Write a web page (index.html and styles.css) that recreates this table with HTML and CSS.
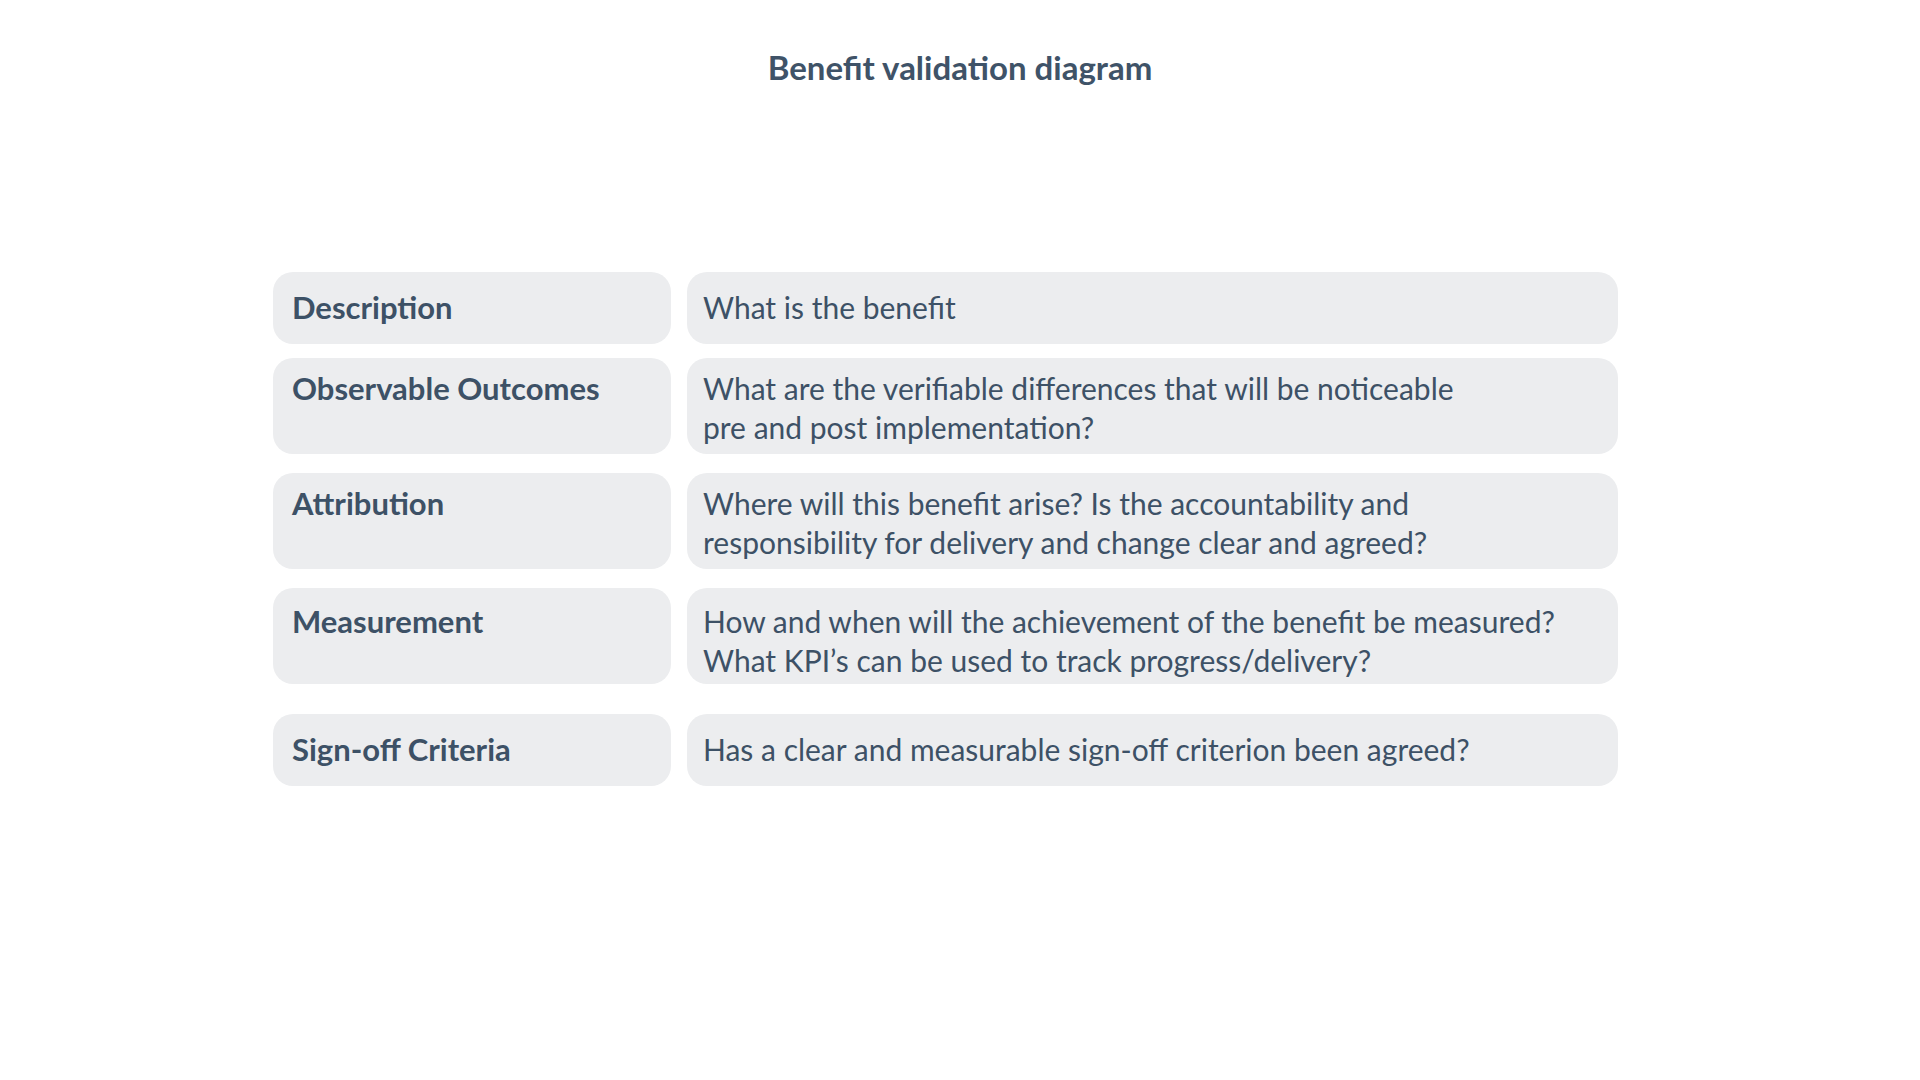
FILE: index.html
```html
<!DOCTYPE html>
<html lang="en">
<head>
<meta charset="utf-8">
<title>Benefit validation diagram</title>
<link rel="stylesheet" href="styles.css">
</head>
<body>
<main class="page">
  <h1 class="title">Benefit validation diagram</h1>
  <section class="table">
    <div class="row r1">
      <div class="cell label">Description</div>
      <div class="cell text">What is the benefit</div>
    </div>
    <div class="row r2">
      <div class="cell label top">Observable Outcomes</div>
      <div class="cell text">What are the verifiable differences that will be noticeable<br>pre and post implementation?</div>
    </div>
    <div class="row r3">
      <div class="cell label top">Attribution</div>
      <div class="cell text">Where will this benefit arise? Is the accountability and<br>responsibility for delivery and change clear and agreed?</div>
    </div>
    <div class="row r4">
      <div class="cell label top">Measurement</div>
      <div class="cell text">How and when will the achievement of the benefit be measured?<br>What KPI’s can be used to track progress/delivery?</div>
    </div>
    <div class="row r5">
      <div class="cell label">Sign-off Criteria</div>
      <div class="cell text">Has a clear and measurable sign-off criterion been agreed?</div>
    </div>
  </section>
</main>
</body>
</html>
```
FILE: styles.css
```css
* { box-sizing: border-box; }
html, body { margin: 0; padding: 0; background: #ffffff; }
body {
  font-family: Lato, "Open Sans", sans-serif;
  color: #3d5166;
  width: 1920px;
  height: 1080px;
}
.page { display: flex; flex-direction: column; align-items: center; }
.title {
  margin: 46px 0 0 0;
  font-size: 33px;
  line-height: 42px;
  font-weight: 700;
  color: #3f5368;
}
.table {
  margin-top: 184px;
  align-self: flex-start;
  margin-left: 273px;
  width: 1345px;
  display: flex;
  flex-direction: column;
}
.row {
  display: grid;
  grid-template-columns: 398px 931px;
  column-gap: 16px;
}
.r2 { margin-top: 14px; }
.r3, .r4 { margin-top: 19px; }
.r5 { margin-top: 30px; }
.cell {
  background: #ecedef;
  border-radius: 20px;
  min-height: 72px;
  padding-top: 11px;
  padding-bottom: 7px;
  display: flex;
  align-items: center;
  line-height: 39px;
}
.r1 .cell, .r5 .cell { padding-top: 8px; padding-bottom: 10px; }
.r4 .cell { padding-top: 14px; padding-bottom: 4px; }
.label {
  padding-left: 19px;
  font-weight: 700;
  font-size: 31px;
}
.label.top { align-items: flex-start; }
.text {
  padding-left: 16px;
  font-size: 30px;
  font-weight: 400;
}
```
